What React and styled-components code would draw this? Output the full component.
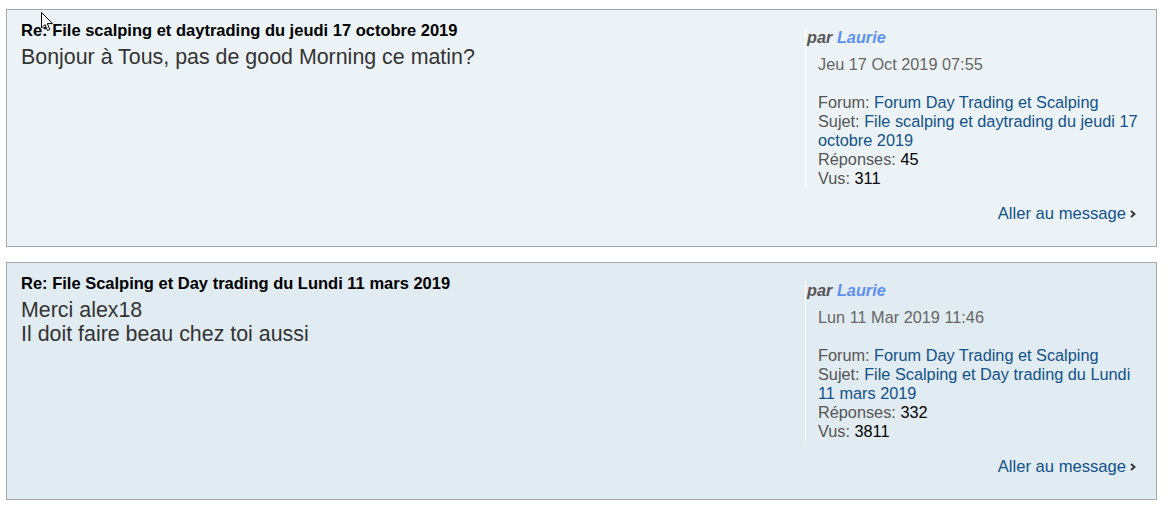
import styled, { createGlobalStyle } from "styled-components";

const GlobalStyle = createGlobalStyle`
    body {
        margin: 0;
        background: #ffffff;
        font-family: "Liberation Sans", Arial, sans-serif;
    }
`;

const posts = [
    {
        title: "Re: File scalping et daytrading du jeudi 17 octobre 2019",
        lines: ["Bonjour à Tous, pas de good Morning ce matin?"],
        author: "Laurie",
        date: "Jeu 17 Oct 2019 07:55",
        forum: "Forum Day Trading et Scalping",
        topic: "File scalping et daytrading du jeudi 17 octobre 2019",
        replies: 45,
        views: 311,
        bg: "#ecf3f7",
    },
    {
        title: "Re: File Scalping et Day trading du Lundi 11 mars 2019",
        lines: ["Merci alex18", "Il doit faire beau chez toi aussi"],
        author: "Laurie",
        date: "Lun 11 Mar 2019 11:46",
        forum: "Forum Day Trading et Scalping",
        topic: "File Scalping et Day trading du Lundi 11 mars 2019",
        replies: 332,
        views: 3811,
        bg: "#e1ebf2",
    },
];

function Chevron() {
    return (
        <svg width="6" height="8" viewBox="0 0 6 8">
            <path d="M1 1 L4.5 4 L1 7" fill="none" stroke="#333" strokeWidth="1.9" />
        </svg>
    );
}

function Cursor() {
    return (
        <CursorMark width="13" height="20" viewBox="0 0 13 20">
            <path
                d="M0.5 0.5 L0.5 16 L4 12.5 L6.5 18.5 L8.8 17.5 L6.3 11.6 L11.5 11.6 Z"
                fill="#fff"
                stroke="#000"
                strokeWidth="1"
                strokeLinejoin="round"
            />
        </CursorMark>
    );
}

function Post({ post }) {
    return (
        <Panel bg={post.bg}>
            <Row>
                <PostBody>
                    <Title>{post.title}</Title>
                    <Content>
                        {post.lines.map((line) => (
                            <div key={line}>{line}</div>
                        ))}
                    </Content>
                </PostBody>
                <Profile>
                    <Author>
                        par <AuthorName>{post.author}</AuthorName>
                    </Author>
                    <DateLine>{post.date}</DateLine>
                    <Info>&nbsp;</Info>
                    <Info>
                        Forum: <Link>{post.forum}</Link>
                    </Info>
                    <Info>
                        Sujet: <Link>{post.topic}</Link>
                    </Info>
                    <Info>
                        Réponses: <Count>{post.replies}</Count>
                    </Info>
                    <Info>
                        Vus: <Count>{post.views}</Count>
                    </Info>
                </Profile>
            </Row>
            <Footer>
                <Jump>
                    Aller au message <Chevron />
                </Jump>
            </Footer>
        </Panel>
    );
}

export default function App() {
    return (
        <>
            <GlobalStyle />
            <Page>
                {posts.map((post) => (
                    <Post key={post.title} post={post} />
                ))}
                <Cursor />
            </Page>
        </>
    );
}

const Page = styled.div`
    position: relative;
    display: flex;
    flex-direction: column;
    gap: 15px;
    padding: 9px 11px 0 6px;
`;

const CursorMark = styled.svg`
    position: absolute;
    left: 41px;
    top: 12px;
`;

const Panel = styled.div`
    background: ${(props) => props.bg};
    border: 1px solid #a8a8a8;
    padding: 11px 10px 23px 14px;
    height: 238px;
    box-sizing: border-box;
`;

const Row = styled.div`
    display: flex;
    align-items: flex-start;
`;

const PostBody = styled.div`
    flex: 1;
`;

const Title = styled.h3`
    margin: 0;
    font-size: 16.5px;
    line-height: 19px;
    font-weight: bold;
    color: #000;
`;

const Content = styled.div`
    margin-top: 5px;
    font-size: 21.4px;
    line-height: 24px;
    color: #333;
`;

const Profile = styled.dl`
    margin: 7px 0 0 0;
    width: 339px;
    padding-left: 1px;
    border-left: 1px solid #ffffff;
    font-size: 16.3px;
    line-height: 19px;
    color: #555;
`;

const Author = styled.dt`
    font-weight: bold;
    font-style: italic;
    color: #555;
    margin-bottom: 8px;
`;

const AuthorName = styled.span`
    color: #5e91ee;
`;

const Info = styled.dd`
    margin: 0 0 0 11px;
`;

const DateLine = styled(Info)`
    color: #666;
`;

const Link = styled.span`
    color: #105289;
`;

const Count = styled.span`
    color: #000;
`;

const Footer = styled.div`
    display: flex;
    justify-content: flex-end;
    margin-top: 16px;
    padding-right: 10px;
`;

const Jump = styled.span`
    display: inline-flex;
    align-items: center;
    gap: 4px;
    font-size: 16.6px;
    line-height: 19px;
    color: #105289;
`;
